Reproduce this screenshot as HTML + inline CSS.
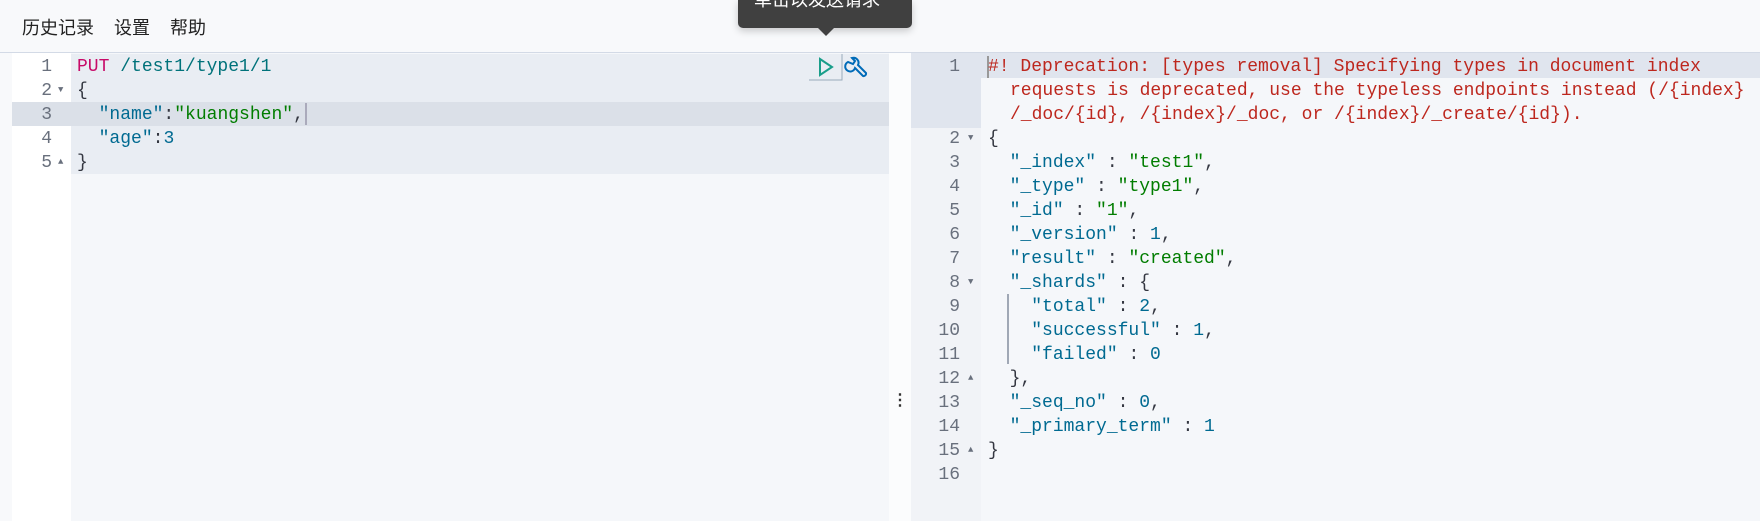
<!DOCTYPE html>
<html><head><meta charset="utf-8"><style>
body{margin:0;width:1760px;height:521px;background:#f8f9fb;position:relative;overflow:hidden;font-family:"Liberation Mono",monospace;}
.menu{position:absolute;top:14px;left:22px;font:18px "Liberation Sans","Noto Sans CJK SC",sans-serif;color:#222;}
.menu span{margin-right:20px}
.ab{position:absolute}
.ln{position:absolute;height:24px;line-height:24px;font-size:18px;white-space:pre;}
.g{color:#69707d;text-align:right;width:40px}
.k{color:#c80a68}.p{color:#00727a}.s{color:#017d00}.n{color:#006a91}.r{color:#bd271e}.t{color:#343741}
.fa{position:absolute;font-size:9px;color:#69707d}
</style></head><body>
<div class="menu"><span>历史记录</span><span>设置</span><span>帮助</span></div>
<div class="ab" style="left:0;top:52px;width:1760px;height:1px;background:#d3dae6"></div>
<!-- left editor -->
<div class="ab" style="left:12px;top:53px;width:59px;height:468px;background:#fff"></div>
<div class="ab" style="left:71px;top:53px;width:818px;height:468px;background:#f5f7fa"></div>
<div class="ab" style="left:71px;top:54px;width:818px;height:120px;background:#e9edf3"></div>
<div class="ab" style="left:12px;top:102px;width:877px;height:24px;background:#dbe0e8"></div>
<div class="ab" style="left:305px;top:103px;width:2px;height:22px;background:#aab"></div>
<div class="ln g" style="left:12px;top:55px">1</div>
<div class="ln g" style="left:12px;top:79px">2</div><div class="fa" style="left:58px;top:85px">▼</div>
<div class="ln g" style="left:12px;top:103px">3</div>
<div class="ln g" style="left:12px;top:127px">4</div>
<div class="ln g" style="left:12px;top:151px">5</div><div class="fa" style="left:58px;top:157px">▲</div>
<div class="ln" style="left:77px;top:55px"><span class="k">PUT</span> <span class="p">/test1/type1/1</span></div>
<div class="ln t" style="left:77px;top:79px">{</div>
<div class="ln" style="left:77px;top:103px">  <span class="n">"name"</span><span class="t">:</span><span class="s">"kuangshen"</span><span class="t">,</span></div>
<div class="ln" style="left:77px;top:127px">  <span class="n">"age"</span><span class="t">:</span><span class="n">3</span></div>
<div class="ln t" style="left:77px;top:151px">}</div>
<svg class="ab" style="left:808px;top:54px" width="60" height="30" viewBox="0 0 60 30"><path d="M12 5 L24 13 L12 21 Z" fill="none" stroke="#1a9e8a" stroke-width="2"/><path d="M1 26 H34 V0" fill="none" stroke="#9ab" stroke-width="1"/><path d="M40 8 a5 5 0 1 0 7 6 l8 8 a2.5 2.5 0 0 0 3 -3 l-8 -8 a5 5 0 0 0 -6 -7 l3 3 -2 3 z" fill="none" stroke="#006bb8" stroke-width="2"/></svg>
<!-- tooltip -->
<div class="ab" style="left:738px;top:0;width:174px;height:28px;background:#404040;border-radius:0 0 5px 5px;box-shadow:0 3px 8px rgba(0,0,0,.2);overflow:hidden"><div style="position:absolute;left:16px;top:-14px;font:18px 'Liberation Sans','Noto Sans CJK SC',sans-serif;color:#fff;white-space:nowrap">单击以发送请求</div></div>
<div class="ab" style="left:818px;top:28px;width:0;height:0;border-left:8px solid transparent;border-right:8px solid transparent;border-top:8px solid #404040"></div>
<!-- divider -->
<div class="ab" style="left:889px;top:53px;width:22px;height:468px;background:#fbfcfd"></div>
<div class="ab" style="left:892px;top:390px;font-size:16px;color:#333;font-family:'Liberation Sans',sans-serif;font-weight:bold">⋮</div>
<!-- right editor -->
<div class="ab" style="left:911px;top:53px;width:70px;height:468px;background:#f1f3f7"></div>
<div class="ab" style="left:981px;top:53px;width:779px;height:468px;background:#f5f7fa"></div>
<div class="ab" style="left:911px;top:53px;width:849px;height:25px;background:#e0e5ee"></div>
<div class="ab" style="left:911px;top:78px;width:70px;height:50px;background:#e0e5ee"></div>
<div class="ab" style="left:987px;top:56px;width:2px;height:22px;background:#999"></div>
<div class="ab" style="left:1007px;top:294px;width:2px;height:70px;background:#a0a8b5"></div>
<div class="ln g" style="left:920px;top:55px">1</div>
<div class="ln r" style="left:988px;top:55px">#! Deprecation: [types removal] Specifying types in document index</div>
<div class="ln r" style="left:1010px;top:79px">requests is deprecated, use the typeless endpoints instead (/{index}</div>
<div class="ln r" style="left:1010px;top:103px">/_doc/{id}, /{index}/_doc, or /{index}/_create/{id}).</div>
<div class="ln g" style="left:920px;top:127px">2</div><div class="fa" style="left:968px;top:133px">▼</div>
<div class="ln t" style="left:988px;top:127px">{</div>
<div class="ln g" style="left:920px;top:151px">3</div><div class="ln" style="left:988px;top:151px">  <span class="n">"_index"</span><span class="t"> : </span><span class="s">"test1"</span><span class="t">,</span></div>
<div class="ln g" style="left:920px;top:175px">4</div><div class="ln" style="left:988px;top:175px">  <span class="n">"_type"</span><span class="t"> : </span><span class="s">"type1"</span><span class="t">,</span></div>
<div class="ln g" style="left:920px;top:199px">5</div><div class="ln" style="left:988px;top:199px">  <span class="n">"_id"</span><span class="t"> : </span><span class="s">"1"</span><span class="t">,</span></div>
<div class="ln g" style="left:920px;top:223px">6</div><div class="ln" style="left:988px;top:223px">  <span class="n">"_version"</span><span class="t"> : </span><span class="n">1</span><span class="t">,</span></div>
<div class="ln g" style="left:920px;top:247px">7</div><div class="ln" style="left:988px;top:247px">  <span class="n">"result"</span><span class="t"> : </span><span class="s">"created"</span><span class="t">,</span></div>
<div class="ln g" style="left:920px;top:271px">8</div><div class="fa" style="left:968px;top:277px">▼</div><div class="ln" style="left:988px;top:271px">  <span class="n">"_shards"</span><span class="t"> : {</span></div>
<div class="ln g" style="left:920px;top:295px">9</div><div class="ln" style="left:988px;top:295px">    <span class="n">"total"</span><span class="t"> : </span><span class="n">2</span><span class="t">,</span></div>
<div class="ln g" style="left:920px;top:319px">10</div><div class="ln" style="left:988px;top:319px">    <span class="n">"successful"</span><span class="t"> : </span><span class="n">1</span><span class="t">,</span></div>
<div class="ln g" style="left:920px;top:343px">11</div><div class="ln" style="left:988px;top:343px">    <span class="n">"failed"</span><span class="t"> : </span><span class="n">0</span></div>
<div class="ln g" style="left:920px;top:367px">12</div><div class="fa" style="left:968px;top:373px">▲</div><div class="ln t" style="left:988px;top:367px">  },</div>
<div class="ln g" style="left:920px;top:391px">13</div><div class="ln" style="left:988px;top:391px">  <span class="n">"_seq_no"</span><span class="t"> : </span><span class="n">0</span><span class="t">,</span></div>
<div class="ln g" style="left:920px;top:415px">14</div><div class="ln" style="left:988px;top:415px">  <span class="n">"_primary_term"</span><span class="t"> : </span><span class="n">1</span></div>
<div class="ln g" style="left:920px;top:439px">15</div><div class="fa" style="left:968px;top:445px">▲</div><div class="ln t" style="left:988px;top:439px">}</div>
<div class="ln g" style="left:920px;top:463px">16</div>
</body></html>
